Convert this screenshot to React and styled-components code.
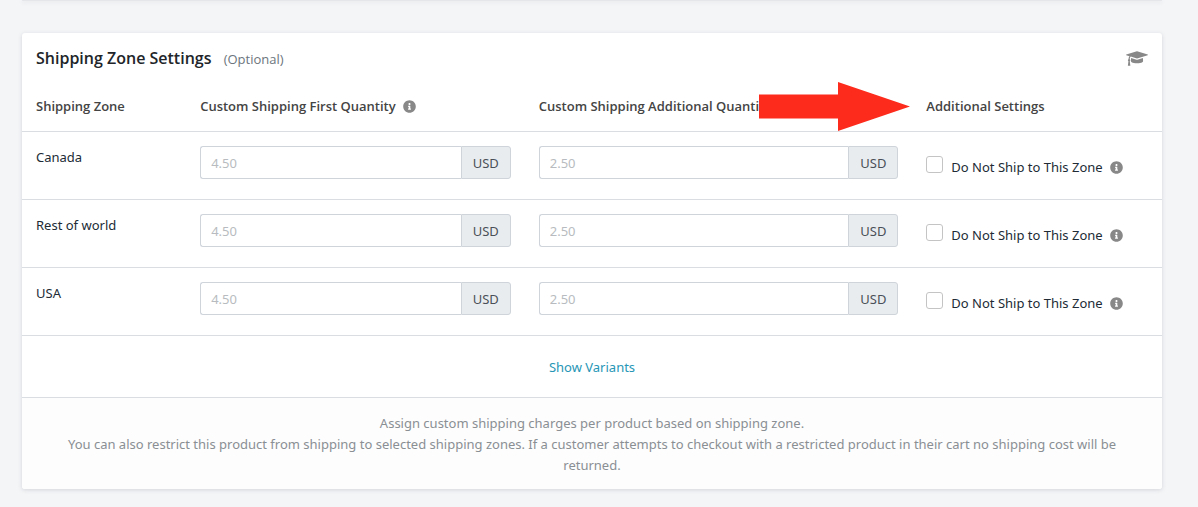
import React, { useState } from 'react';
import styled, { createGlobalStyle } from 'styled-components';
import { FaInfoCircle } from 'react-icons/fa';

const GlobalStyle = createGlobalStyle`
  *, *::before, *::after {
    box-sizing: border-box;
  }

  body {
    margin: 0;
    background: #f4f5f7;
    color: #212b36;
    font-family: 'Noto Sans', sans-serif;
    font-size: 13px;
    line-height: 21px;
  }
`;

const Page = styled.main`
  padding: 0 36px 18px 22px;
`;

const Card = styled.section`
  background: #fff;
  border-radius: 3px;
  box-shadow: 0 1px 4px rgba(60, 70, 90, 0.18);
`;

// Bottom edge of the card that sits above the shipping settings
const CardEnd = styled(Card)`
  height: 1px;
  margin-bottom: 32px;
  background: #e4e6ea;
`;

const CardHeader = styled.header`
  display: flex;
  align-items: flex-start;
  justify-content: space-between;
  padding: 13px 14px;
`;

const Title = styled.h2`
  margin: 0;
  color: #212529;
  font-family: 'Open Sans', sans-serif;
  font-size: 16px;
  font-weight: 600;
  line-height: 24px;
`;

const Optional = styled.small`
  margin-left: 8px;
  color: #6c757d;
  font-size: 13px;
  font-weight: 400;
`;

const HelpButton = styled.button`
  display: flex;
  padding: 4px 0 0;
  border: 0;
  background: none;
  color: #888;
  cursor: pointer;
`;

const Table = styled.table`
  width: 100%;
  border-collapse: collapse;
  table-layout: fixed;
`;

const Col = styled.col`
  width: ${({ $share }) => $share}%;
`;

const Th = styled.th`
  position: relative;
  padding: 12px 14px 14px;
  border-bottom: 1px solid #dadde1;
  color: #444;
  font-family: 'Open Sans', sans-serif;
  font-weight: 600;
  text-align: left;
  white-space: nowrap;
`;

const Td = styled.td`
  padding: 14px 14px 20px;
  border-bottom: 1px solid #dadde1;
  vertical-align: top;
`;

const ZoneName = styled(Td)`
  padding-top: 15px;
`;

const InfoIcon = styled(FaInfoCircle)`
  margin-left: 7px;
  color: #888;
  font-size: 13px;
  vertical-align: -2px;
`;

const Arrow = styled.svg`
  position: absolute;
  bottom: 0;
  right: calc(100% + 2px);
  width: 151px;
  height: 49px;
`;

const PriceGroup = styled.div`
  display: flex;
  height: 33px;
`;

const PriceInput = styled.input`
  flex: 1;
  min-width: 0;
  padding: 1px 10px 0;
  border: 1px solid #ced4da;
  border-right: 0;
  border-radius: 3px 0 0 3px;
  background: #fff;
  color: #495057;
  font: inherit;

  &::placeholder {
    color: #b8bcc0;
    opacity: 1;
  }
`;

const Currency = styled.span`
  display: flex;
  align-items: center;
  justify-content: center;
  width: 50px;
  padding-top: 1px;
  border: 1px solid #ced4da;
  border-radius: 0 3px 3px 0;
  background: #e9ecef;
  color: #495057;
`;

const RestrictLabel = styled.label`
  display: flex;
  align-items: flex-start;
  padding-top: 10px;
  line-height: 22px;
  white-space: nowrap;
`;

const Checkbox = styled.input`
  appearance: none;
  flex: none;
  width: 17px;
  height: 17px;
  margin: 0 8px 0 0;
  border: 1px solid #c4c4c4;
  border-radius: 3px;
  background: #fff;

  &:checked {
    border-color: #2796b6;
    background: #2796b6;
  }
`;

const VariantsBar = styled.div`
  padding: 21px 14px 19px;
  border-bottom: 1px solid #dadde1;
  text-align: center;
`;

const VariantsLink = styled.a`
  color: #2796b6;
  text-decoration: none;
`;

const CardFooter = styled.footer`
  padding: 15px 28px 13px;
  border-radius: 0 0 3px 3px;
  background: #fdfdfd;
  color: #8a8f94;
  text-align: center;
`;

const FooterText = styled.p`
  margin: 0;
`;

const zones = ['Canada', 'Rest of world', 'USA'];

function GraduationCap() {
  return (
    <svg width='22' height='17' viewBox='0 0 2304 1792' fill='currentColor' aria-hidden='true'>
      <path d='M1774 836l18 316q4 69-82 128t-235 93.5-323 34.5-323-34.5-235-93.5-82-128l18-316 574 181q22 7 48 7t48-7zM2304 512q0 23-22 31l-1120 352q-4 1-10 1t-10-1l-652-206q-43 34-71 111.5t-34 178.5q63 36 63 109 0 69-58 107l58 433q2 14-8 25-9 11-24 11h-192q-15 0-24-11-10-11-8-25l58-433q-58-38-58-107 0-73 65-111 11-207 98-330l-333-104q-22-8-22-31t22-31l1120-352q4-1 10-1t10 1l1120 352q22 8 22 31z' />
    </svg>
  );
}

function PriceField({ label, placeholder }) {
  return (
    <PriceGroup>
      <PriceInput type='text' aria-label={label} placeholder={placeholder} />
      <Currency>USD</Currency>
    </PriceGroup>
  );
}

function ZoneRow({ zone }) {
  const [restricted, setRestricted] = useState(false);

  return (
    <tr>
      <ZoneName>{zone}</ZoneName>
      <Td><PriceField label={`${zone} first quantity`} placeholder='4.50' /></Td>
      <Td><PriceField label={`${zone} additional quantity`} placeholder='2.50' /></Td>
      <Td>
        <RestrictLabel>
          <Checkbox type='checkbox' checked={restricted} onChange={(e) => setRestricted(e.target.checked)} />
          <span>Do Not Ship to This Zone<InfoIcon /></span>
        </RestrictLabel>
      </Td>
    </tr>
  );
}

function App() {
  return (
    <Page>
      <GlobalStyle />
      <CardEnd />
      <Card>
        <CardHeader>
          <Title>Shipping Zone Settings <Optional>(Optional)</Optional></Title>
          <HelpButton type='button' aria-label='Help'><GraduationCap /></HelpButton>
        </CardHeader>
        <Table>
          <colgroup>
            <Col $share={14.4} />
            <Col $share={29.7} />
            <Col $share={34} />
            <Col $share={21.9} />
          </colgroup>
          <thead>
            <tr>
              <Th>Shipping Zone</Th>
              <Th>Custom Shipping First Quantity<InfoIcon /></Th>
              <Th>Custom Shipping Additional Quantity</Th>
              <Th>
                Additional Settings
                <Arrow viewBox='0 0 151 49' aria-hidden='true'>
                  <path d='M0 12.5H79V0L151 24.5L79 49V36.5H0Z' fill='#fc2b1c' />
                </Arrow>
              </Th>
            </tr>
          </thead>
          <tbody>
            {zones.map(zone => <ZoneRow key={zone} zone={zone} />)}
          </tbody>
        </Table>
        <VariantsBar>
          <VariantsLink href='#variants'>Show Variants</VariantsLink>
        </VariantsBar>
        <CardFooter>
          <FooterText>Assign custom shipping charges per product based on shipping zone.</FooterText>
          <FooterText>
            You can also restrict this product from shipping to selected shipping zones. If a customer attempts to
            checkout with a restricted product in their cart no shipping cost will be returned.
          </FooterText>
        </CardFooter>
      </Card>
    </Page>
  );
}

export default App;
